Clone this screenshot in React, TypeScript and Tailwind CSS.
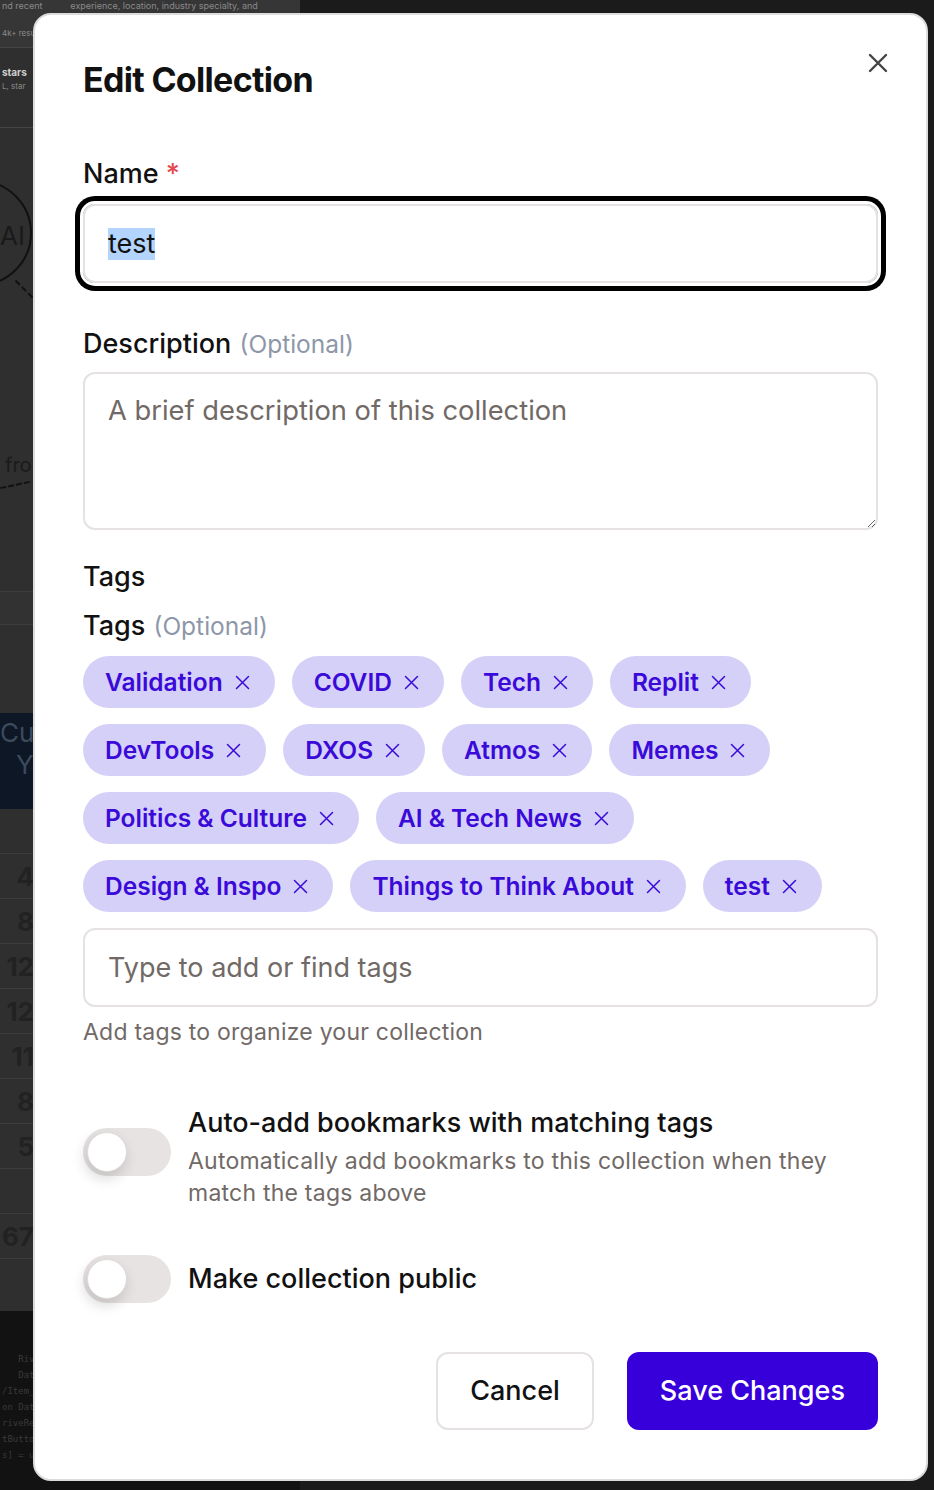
import React from 'react';

const tagRows: string[][] = [
  ['Validation', 'COVID', 'Tech', 'Replit'],
  ['DevTools', 'DXOS', 'Atmos', 'Memes'],
  ['Politics & Culture', 'AI & Tech News'],
  ['Design & Inspo', 'Things to Think About', 'test'],
];

function XIcon({ size, stroke, width }: { size: number; stroke: string; width: number }) {
  return (
    <svg width={size} height={size} viewBox="0 0 20 20" fill="none">
      <path d="M2 2L18 18M18 2L2 18" stroke={stroke} strokeWidth={width} strokeLinecap="round" />
    </svg>
  );
}

function Toggle() {
  return (
    <div className="w-[88px] h-[48px] shrink-0 rounded-full bg-[#e7e3e2] p-[4px] flex items-center">
      <div className="w-[40px] h-[40px] rounded-full bg-white border border-[#dedad9] shadow-[-2px_6px_14px_rgba(0,0,0,0.16)]" />
    </div>
  );
}

function Backdrop() {
  return (
    <div className="flex w-[934px] h-[1490px]">
      {/* left part of the page behind the dialog */}
      <div className="w-[300px] shrink-0 flex flex-col bg-[#2f2f2f] text-[#8a8a8a]">
        <div className="h-[48px] bg-[#363636] border-b border-[#444] flex flex-col px-[2px] pt-[1px]">
          <div className="text-[9px] leading-[10px] whitespace-nowrap">nd recent&nbsp;&nbsp;&nbsp;&nbsp;&nbsp;&nbsp;&nbsp;&nbsp;&nbsp;&nbsp;&nbsp;experience, location, industry specialty, and</div>
          <div className="text-[9px] leading-[10px] pl-[63px]">more</div>
          <div className="text-[8px] mt-[6px]">4k+ results</div>
        </div>
        <div className="h-[80px] border-b border-[#444] px-[2px] pt-[18px]">
          <div className="text-[10px] font-bold text-[#cfcfcf] leading-[12px]">stars</div>
          <div className="text-[8px] leading-[12px] mt-[2px]">L, star</div>
        </div>
        <div className="h-[463px] relative">
          <div className="absolute -left-[74px] top-[52px] w-[106px] h-[106px] rounded-full border-2 border-[#111]" />
          <span className="absolute left-0 top-[88px] text-[26px] text-[#1a1a1a]">AI</span>
          <div className="absolute left-[12px] top-[160px] w-[24px] border-t-2 border-dashed border-[#111] rotate-45" />
          <span className="absolute left-[5px] top-[322px] text-[20px] text-[#1a1a1a]">fro</span>
          <div className="absolute left-0 top-[356px] w-[30px] border-t-2 border-dashed border-[#111] -rotate-12" />
        </div>
        <div className="h-[34px] border-y border-[#3e3e3e] bg-[#323232]" />
        <div className="h-[88px]" />
        <div className="h-[96px] bg-[#0d1726] flex flex-col text-[#3c4a5c] text-[26px] leading-[32px] pt-[4px]">
          <span>Cu</span>
          <span className="pl-[16px]">Y</span>
        </div>
        <div className="flex flex-col text-[26px] font-bold text-[#222]">
          {['', '4', '8', '12', '12', '11', '8', '5', '', '67'].map((n, i) => (
            <div
              key={i}
              className="h-[45px] w-[300px] border-b border-[#3c3c3c] flex items-center justify-end pr-[266px] shrink-0"
            >
              {n}
            </div>
          ))}
        </div>
        <div className="h-[52px]" />
        <div className="flex-1 bg-[#121212] text-[9px] leading-[16px] text-[#3a3a3a] font-['DejaVu_Sans_Mono',monospace] pt-[40px] pl-[2px]">
          <div>&nbsp;&nbsp;&nbsp;RiveRe</div>
          <div>&nbsp;&nbsp;&nbsp;DataBi</div>
          <div>/Item_Va</div>
          <div>on Data</div>
          <div>riveRef</div>
          <div>tButton</div>
          <div>s] = use</div>
        </div>
      </div>
      <div className="flex-1 bg-[#1b1b1b]" />
    </div>
  );
}

export default function App() {
  return (
    <div className="relative w-[934px] h-[1490px] overflow-hidden bg-[#2c2c2c] font-['Inter',sans-serif]">
      <Backdrop />

      {/* Dialog */}
      <div className="absolute left-[33px] top-[13px] w-[895px] bg-white border-2 border-[#dcdcdc] rounded-[18px] px-[48px] pt-[45px] pb-[49px] flex flex-col">
        <button className="absolute top-[36px] right-[36px] w-[24px] h-[24px] flex items-center justify-center">
          <XIcon size={20} stroke="#444" width={2.4} />
        </button>

        <h1 className="text-[34px] leading-[40px] font-bold tracking-[-0.02em] text-[#111]">Edit Collection</h1>

        {/* Name */}
        <label className="mt-[58px] text-[27px] leading-[32px] font-medium text-[#111]">
          Name <span className="text-[#e5484d]">*</span>
        </label>
        <div className="mt-[14px] h-[79px] rounded-[12px] border-2 border-[#e5e2e1] ring-[5px] ring-black ring-offset-[3px] ring-offset-white px-[23px] flex items-center">
          <span className="text-[27px] leading-[32px] text-[#111] bg-[#b3d4fd]">test</span>
        </div>

        {/* Description */}
        <label className="mt-[45px] text-[27px] leading-[32px] font-medium text-[#111]">
          Description <span className="ml-[1px] text-[24.5px] font-normal text-[#8d97a9]">(Optional)</span>
        </label>
        <textarea
          className="mt-[12px] h-[158px] rounded-[12px] border-2 border-[#e5e2e1] px-[23px] py-[19px] text-[27.3px] leading-[36px] text-[#111] placeholder:text-[#716966] outline-none resize-y"
          placeholder="A brief description of this collection"
        />

        {/* Tags */}
        <div className="mt-[31px] text-[27px] leading-[32px] font-medium text-[#111]">Tags</div>
        <label className="mt-[17px] text-[27px] leading-[32px] font-medium text-[#111]">
          Tags <span className="ml-[1px] text-[24.5px] font-normal text-[#8d97a9]">(Optional)</span>
        </label>
        <div className="mt-[14px] flex flex-col gap-[16px]">
          {tagRows.map((row, i) => (
            <div key={i} className="flex gap-[17px]">
              {row.map((t) => (
                <span
                  key={t}
                  className="h-[52px] rounded-full bg-[#d5d0f8] pl-[22px] pr-[25px] flex items-center gap-[12px] text-[24.5px] font-semibold text-[#3a0ad8]"
                >
                  {t}
                  <XIcon size={15} stroke="#3a0ad8" width={2} />
                </span>
              ))}
            </div>
          ))}
        </div>
        <input
          className="mt-[16px] h-[79px] rounded-[12px] border-2 border-[#e5e2e1] px-[23px] text-[27px] text-[#111] placeholder:text-[#716966] outline-none"
          placeholder="Type to add or find tags"
        />
        <p className="mt-[9px] text-[23px] leading-[32px] tracking-[0.01em] text-[#716966]">Add tags to organize your collection</p>

        {/* Auto-add */}
        <div className="mt-[56px] flex items-start gap-[17px]">
          <div className="mt-[24px]">
            <Toggle />
          </div>
          <div className="flex flex-col">
            <span className="text-[27px] leading-[37px] font-medium text-[#111]">Auto-add bookmarks with matching tags</span>
            <span className="mt-[4px] text-[23px] leading-[32px] tracking-[0.01em] text-[#716966]">
              Automatically add bookmarks to this collection when they match the tags above
            </span>
          </div>
        </div>

        {/* Public */}
        <div className="mt-[46px] flex items-center gap-[17px]">
          <Toggle />
          <span className="text-[27px] leading-[34px] font-medium text-[#111]">Make collection public</span>
        </div>

        {/* Actions */}
        <div className="mt-[49px] flex justify-end gap-[33px]">
          <button className="h-[78px] px-[32px] rounded-[12px] border-2 border-[#e5e2e1] bg-white text-[27px] font-medium text-[#111]">
            Cancel
          </button>
          <button className="h-[78px] px-[33px] rounded-[12px] bg-[#3700db] text-[27px] font-medium text-white">
            Save Changes
          </button>
        </div>
      </div>
    </div>
  );
}
